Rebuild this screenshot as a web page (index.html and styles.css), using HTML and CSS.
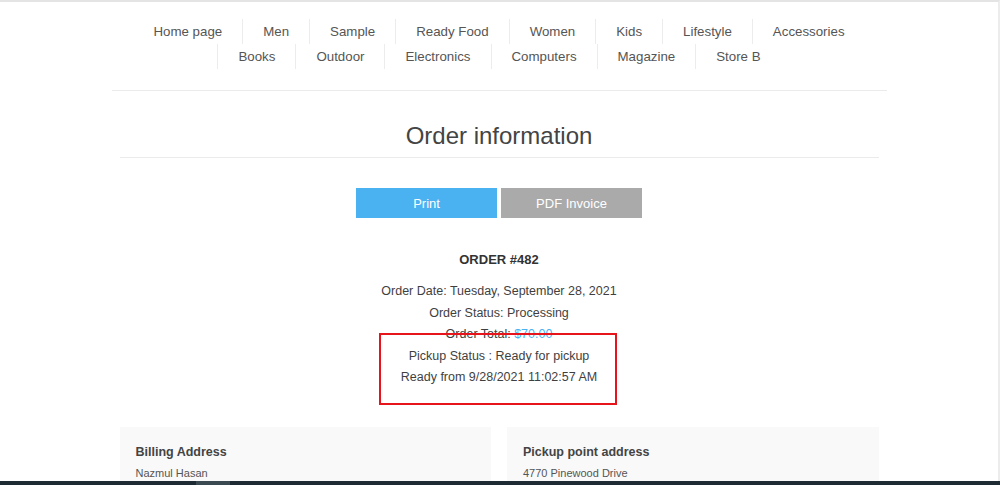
FILE: index.html
```html
<!DOCTYPE html>
<html lang="en">
<head>
    <meta charset="UTF-8">
    <title>Order information</title>
    <link rel="stylesheet" href="styles.css">
</head>
<body>
    <div class="page">
        <div class="header">
            <ul class="menu">
                <li>Home page</li>
                <li>Men</li>
                <li>Sample</li>
                <li>Ready Food</li>
                <li>Women</li>
                <li>Kids</li>
                <li>Lifestyle</li>
                <li>Accessories</li>
                <li>Books</li>
                <li>Outdoor</li>
                <li>Electronics</li>
                <li>Computers</li>
                <li>Magazine</li>
                <li>Store B</li>
            </ul>
        </div>

        <div class="main">
            <h1 class="page-title">Order information</h1>

            <div class="buttons">
                <button class="btn btn-print">Print</button>
                <button class="btn btn-pdf">PDF Invoice</button>
            </div>

            <div class="order-number">ORDER #482</div>

            <div class="order-info">
                <div>Order Date: Tuesday, September 28, 2021</div>
                <div>Order Status: Processing</div>
                <div>Order Total: <span class="total">$70.00</span></div>
                <div>Pickup Status : Ready for pickup</div>
                <div>Ready from 9/28/2021 11:02:57 AM</div>
                <div class="highlight"></div>
            </div>

            <div class="addresses">
                <div class="address-box">
                    <div class="address-title">Billing Address</div>
                    <div class="address-line">Nazmul Hasan</div>
                </div>
                <div class="address-box">
                    <div class="address-title">Pickup point address</div>
                    <div class="address-line">4770 Pinewood Drive</div>
                </div>
            </div>
        </div>
    </div>
    <div class="taskbar"><span class="taskbar-item"></span></div>
</body>
</html>
```

FILE: styles.css
```css
body {
    margin: 0;
    font-family: 'Liberation Sans', Arial, sans-serif;
    color: #444;
    background: #fff;
    overflow: hidden;
}

.page {
    border-top: 2px solid #e4e4e4;
    border-right: 2px solid #ececec;
    min-height: 100vh;
    box-sizing: border-box;
}

.header {
    width: 775px;
    margin: 0 auto;
    padding-top: 17px;
    padding-bottom: 21px;
    border-bottom: 1px solid #ebebeb;
}

.menu {
    list-style: none;
    margin: 0;
    padding: 0;
    display: flex;
    flex-wrap: wrap;
    justify-content: center;
}

.menu li {
    padding: 0 20px;
    font-size: 13.3px;
    line-height: 25px;
    color: #555;
    border-left: 1px solid #ececec;
}

.menu li:first-child {
    border-left: none;
}

.main {
    width: 759px;
    margin: 0 auto;
}

.page-title {
    margin: 30px 0 0;
    padding-bottom: 6px;
    font-size: 24px;
    font-weight: normal;
    line-height: 30px;
    text-align: center;
    color: #444;
    border-bottom: 1px solid #ebebeb;
}

.buttons {
    display: flex;
    justify-content: center;
    gap: 4px;
    margin-top: 30px;
}

.btn {
    width: 141px;
    height: 30px;
    border: none;
    font-family: inherit;
    font-size: 13px;
    color: #fff;
    padding: 0;
}

.btn-print {
    background: #4ab2f1;
}

.btn-pdf {
    background: #aaaaaa;
}

.order-number {
    margin-top: 32px;
    font-size: 13px;
    font-weight: bold;
    line-height: 20px;
    text-align: center;
    color: #333;
}

.order-info {
    position: relative;
    margin-top: 11px;
    font-size: 12.5px;
    line-height: 21.5px;
    text-align: center;
    color: #3f3f3f;
}

.total {
    color: #4ab2f1;
}

.highlight {
    position: absolute;
    top: 52px;
    left: 259px;
    width: 234px;
    height: 68px;
    border: 2px solid #e8141b;
}

.addresses {
    display: flex;
    gap: 16px;
    margin-top: 38px;
}

.address-box {
    flex: 1;
    background: #f9f9f9;
    padding: 17px 16px 20px;
}

.address-title {
    font-size: 12.5px;
    font-weight: bold;
    line-height: 17px;
    color: #444;
}

.address-line {
    margin-top: 5px;
    font-size: 11px;
    line-height: 15px;
    color: #555;
}

.taskbar {
    position: fixed;
    left: 0;
    right: 0;
    bottom: 0;
    height: 4px;
    background: #1e2b32;
}

.taskbar-item {
    position: absolute;
    left: 196px;
    width: 34px;
    height: 4px;
    background: #3b4950;
}
```
